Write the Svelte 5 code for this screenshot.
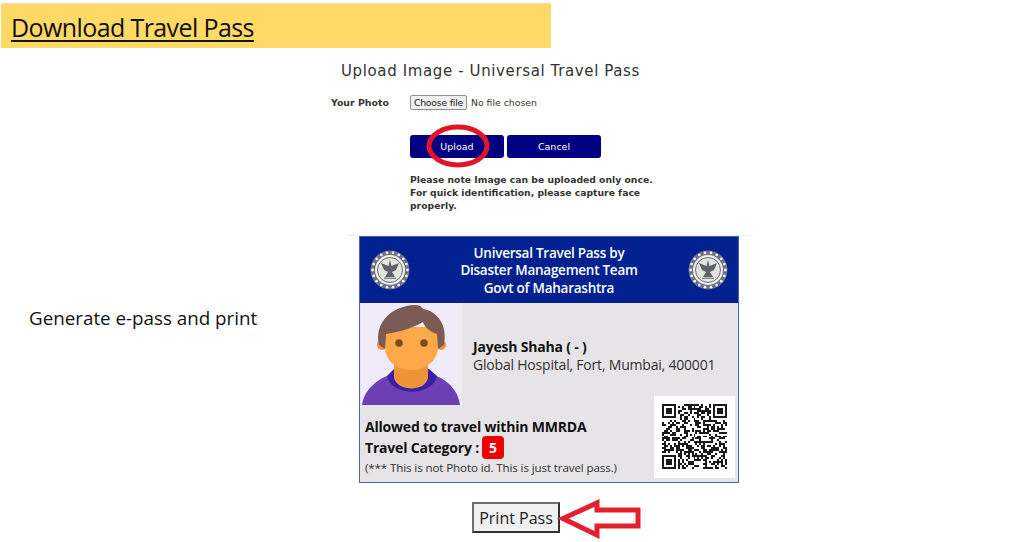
<script>
  const QR_SIZE = 33;

  function inFinder(x, y) {
    const far = QR_SIZE - 8;
    return (x < 8 && y < 8) || (x > far - 1 && y < 8) || (x < 8 && y > far - 1);
  }

  // seeded noise, so the code looks the same on every run
  let seed = 73;
  function next() {
    seed = (seed * 1103515245 + 12345) & 0x7fffffff;
    return (seed >> 16) & 1;
  }

  const modules = [];
  for (let y = 0; y < QR_SIZE; y++) {
    for (let x = 0; x < QR_SIZE; x++) {
      const bit = next();
      if (!inFinder(x, y) && bit) modules.push({ x, y });
    }
  }

  const finders = [
    [0, 0],
    [QR_SIZE - 7, 0],
    [0, QR_SIZE - 7]
  ];

  const dots = Array.from({ length: 18 }, (_, i) => {
    const a = (i / 18) * Math.PI * 2;
    return { x: 20 + Math.cos(a) * 17.4, y: 20 + Math.sin(a) * 17.4 };
  });
</script>

{#snippet emblem()}
  <svg class="emblem" viewBox="0 0 40 40" aria-hidden="true">
    <circle cx="20" cy="20" r="19.5" fill="#6d7088" />
    {#each dots as d}
      <circle cx={d.x} cy={d.y} r="1.4" fill="#f2f2ee" />
    {/each}
    <circle cx="20" cy="20" r="15" fill="#f0f0ea" />
    <circle cx="20" cy="20" r="12.5" fill="#e4e4de" stroke="#6a6c78" stroke-width="1" />
    <path d="M20 10 L21.5 16 L29 13 L26 20 L22 22 L25 27 H15 L18 22 L14 20 L11 13 L18.500 16 Z" fill="#5f616b" />
    <rect x="14" y="27.500" width="12" height="1.500" fill="#8a8c94" />
  </svg>
{/snippet}

<main class="page">
  <h1 class="banner"><span>Download Travel Pass</span></h1>

  <section class="upload">
    <h2>Upload Image - Universal Travel Pass</h2>
    <div class="form-row">
      <span class="field-label">Your Photo</span>
      <div class="file-field">
        <button class="file-btn" type="button">Choose file</button>
        <span>No file chosen</span>
      </div>
    </div>
    <div class="actions">
      <button class="navy" type="button">Upload</button>
      <button class="navy" type="button">Cancel</button>
      <svg class="ring" viewBox="0 0 64 46" aria-hidden="true">
        <ellipse cx="32" cy="23" rx="29" ry="19" fill="none" stroke="#e0152a" stroke-width="5" />
      </svg>
    </div>
    <p class="note">Please note Image can be uploaded only once. For quick identification, please capture face properly.</p>
  </section>

  <section class="generate">
    <p class="caption">Generate e-pass and print</p>
    <div class="pass-col">
      <div class="card">
        <header class="card-head">
          {@render emblem()}
          <div class="card-title">
            <div>Universal Travel Pass by</div>
            <div>Disaster Management Team</div>
            <div>Govt of Maharashtra</div>
          </div>
          {@render emblem()}
        </header>
        <div class="card-body">
          <svg class="avatar" viewBox="0 0 101 102" aria-hidden="true">
            <rect width="101" height="102" fill="#efebf8" />
            <path d="M1 102 C3 86 18 74 33 71 L68 71 C84 74 97 86 99 102 Z" fill="#6c3fb5" />
            <path d="M26 73 C30 94 72 94 76 73 L68 66 L33 66 Z" fill="#3d1fa3" />
            <path d="M33 56 L33 75 C37 89 64 89 67 75 L67 56 Z" fill="#ee9438" />
            <circle cx="21" cy="42" r="5" fill="#ee9438" />
            <circle cx="80" cy="42" r="5" fill="#ee9438" />
            <path d="M24 24 H77 V44 C77 58 64 67 50 67 C36 67 24 58 24 44 Z" fill="#fda94a" />
            <path d="M18 42 C13 20 30 3 54 2 C58 2 60 3 62 6 C76 8 87 22 83 42 L77 46 L76 31 C70 29 64 25 62 19 C50 26 37 29 25 31 L24 46 Z" fill="#7b5b53" />
            <circle cx="38" cy="40" r="3.8" fill="#7d4a1e" />
            <circle cx="63" cy="40" r="3.8" fill="#7d4a1e" />
          </svg>
          <div class="person">
            <strong>Jayesh Shaha ( - )</strong>
            <span>Global Hospital, Fort, Mumbai, 400001</span>
          </div>
          <div class="qr">
            <svg viewBox="0 0 {QR_SIZE} {QR_SIZE}" shape-rendering="crispEdges" aria-hidden="true">
              {#each modules as m}
                <rect x={m.x} y={m.y} width="1" height="1" fill="#1a1a1a" />
              {/each}
              {#each finders as [fx, fy]}
                <rect x={fx} y={fy} width="7" height="7" fill="#1a1a1a" />
                <rect x={fx + 1} y={fy + 1} width="5" height="5" fill="#fff" />
                <rect x={fx + 2} y={fy + 2} width="3" height="3" fill="#1a1a1a" />
              {/each}
            </svg>
          </div>
          <div class="travel">
            <div class="line">Allowed to travel within MMRDA</div>
            <div class="line">Travel Category : <span class="badge">5</span></div>
            <div class="small">(*** This is not Photo id. This is just travel pass.)</div>
          </div>
        </div>
      </div>
      <div class="print-row">
        <button class="print" type="button">Print Pass</button>
        <svg class="arrow" viewBox="0 0 86 40" aria-hidden="true">
          <path d="M7 19.5 L41 4 V11 H82 V27 H41 V36 Z" fill="none" stroke="#e3202e" stroke-width="5" />
        </svg>
      </div>
    </div>
  </section>
</main>

<style>
  :global(body) {
    background: #fff;
  }
  .page {
    width: 1013px;
    height: 542px;
    overflow: hidden;
    padding-top: 3px;
    box-sizing: border-box;
  }
  .banner {
    margin: 0 0 0 1px;
    width: 550px;
    height: 45px;
    box-sizing: border-box;
    padding: 7px 0 0 10px;
    background: #ffd966;
    border-top: 1px solid #dedbd0;
    font: 400 25px/33px "Open Sans", sans-serif;
    letter-spacing: -0.6px;
    color: #111;
  }
  .banner span {
    text-decoration: underline;
    text-decoration-thickness: 2px;
    text-underline-offset: 3px;
  }
  .upload {
    height: 187px;
    font-family: "DejaVu Sans", sans-serif;
    color: #222;
  }
  .upload h2 {
    margin: 0;
    padding: 14px 0 0 341px;
    font-size: 15px;
    line-height: 18px;
    font-weight: 400;
    letter-spacing: 0.62px;
    color: #333;
  }
  .form-row {
    display: flex;
    align-items: center;
    padding: 15px 0 0 331px;
  }
  .field-label {
    width: 79px;
    font-size: 9.4px;
    font-weight: 700;
    color: #333;
  }
  .file-field {
    display: flex;
    align-items: center;
    gap: 4px;
    font: 9.3px "DejaVu Sans", sans-serif;
    color: #333;
  }
  .file-btn {
    width: 57px;
    height: 15px;
    padding: 0;
    border: 1px solid #8f8f8f;
    border-radius: 2px;
    background: #efefef;
    font: 9.3px/13px "DejaVu Sans", sans-serif;
    letter-spacing: -0.2px;
    color: #222;
  }
  .actions {
    position: relative;
    display: flex;
    gap: 3px;
    padding: 25px 0 0 410px;
  }
  .navy {
    width: 94px;
    height: 23px;
    padding: 0;
    border: 0;
    border-radius: 3px;
    background: #000080;
    color: #fff;
    font: 9.5px "DejaVu Sans", sans-serif;
  }
  .ring {
    position: absolute;
    left: 426px;
    top: 13px;
    width: 64px;
    height: 46px;
  }
  .note {
    margin: 0;
    padding: 15px 0 0 410px;
    width: 250px;
    font-size: 9.25px;
    line-height: 13px;
    font-weight: 700;
    color: #333;
  }
  .generate {
    display: flex;
  }
  .caption {
    width: 347px;
    margin: 0;
    padding: 71px 0 0 29px;
    box-sizing: border-box;
    font: 400 18.8px/24px "Open Sans", sans-serif;
    color: #111;
  }
  .pass-col {
    width: 403px;
    border-top: 1px solid #eeeeee;
    padding-left: 12px;
    box-sizing: border-box;
  }
  .card {
    width: 380px;
    height: 247px;
    box-sizing: border-box;
    border: 1px solid #4f64a5;
    background: #e6e4e6;
    font-family: "Open Sans", sans-serif;
    color: #111;
  }
  .card-head {
    display: flex;
    align-items: center;
    justify-content: space-between;
    height: 66px;
    padding: 0 10px;
    background: #00218f;
  }
  .emblem {
    width: 40px;
    height: 40px;
  }
  .card-title {
    padding-top: 2px;
    font-size: 13.5px;
    line-height: 17.5px;
    font-weight: 600;
    letter-spacing: -0.25px;
    text-align: center;
    color: #fff;
  }
  .card-body {
    display: grid;
    grid-template-columns: 102px 1fr 81px;
    grid-template-rows: 93px 9px auto;
    padding-right: 3px;
  }
  .avatar {
    grid-column: 1;
    grid-row: 1 / span 2;
    width: 101px;
    height: 102px;
    margin-left: 1px;
  }
  .person {
    grid-column: 2 / span 2;
    grid-row: 1;
    display: flex;
    flex-direction: column;
    padding: 35px 0 0 11px;
    font-size: 14px;
    line-height: 18px;
    letter-spacing: -0.2px;
    white-space: nowrap;
  }
  .person strong {
    font-weight: 700;
    font-size: 14px;
  }
  .person span {
    color: #333;
  }
  .qr {
    grid-column: 3;
    grid-row: 2 / span 2;
    width: 81px;
    height: 82px;
    box-sizing: border-box;
    padding: 7px 8px;
    background: #fff;
  }
  .qr svg {
    display: block;
    width: 65px;
    height: 67px;
  }
  .travel {
    grid-column: 1 / span 2;
    grid-row: 3;
    padding: 11px 0 0 5px;
    white-space: nowrap;
  }
  .line {
    display: flex;
    align-items: center;
    gap: 3px;
    height: 21px;
    font-size: 14px;
    font-weight: 700;
    letter-spacing: -0.2px;
  }
  .badge {
    display: inline-block;
    width: 22px;
    height: 23px;
    border-radius: 4px;
    background: #f00000;
    color: #fff;
    font-size: 14px;
    line-height: 23px;
    text-align: center;
  }
  .small {
    margin-top: 2px;
    font-size: 11.6px;
    line-height: 16px;
    letter-spacing: -0.12px;
    color: #333;
  }
  .print-row {
    position: relative;
    padding: 19px 0 0 113px;
  }
  .print {
    width: 88px;
    height: 31px;
    padding: 0;
    box-sizing: border-box;
    border: 2px solid #6e6e6e;
    border-right-color: #333;
    border-bottom-color: #333;
    background: #f0f0f0;
    font: 400 16px "Open Sans", sans-serif;
    color: #222;
  }
  .arrow {
    position: absolute;
    left: 197px;
    top: 16px;
    width: 86px;
    height: 40px;
  }
</style>
